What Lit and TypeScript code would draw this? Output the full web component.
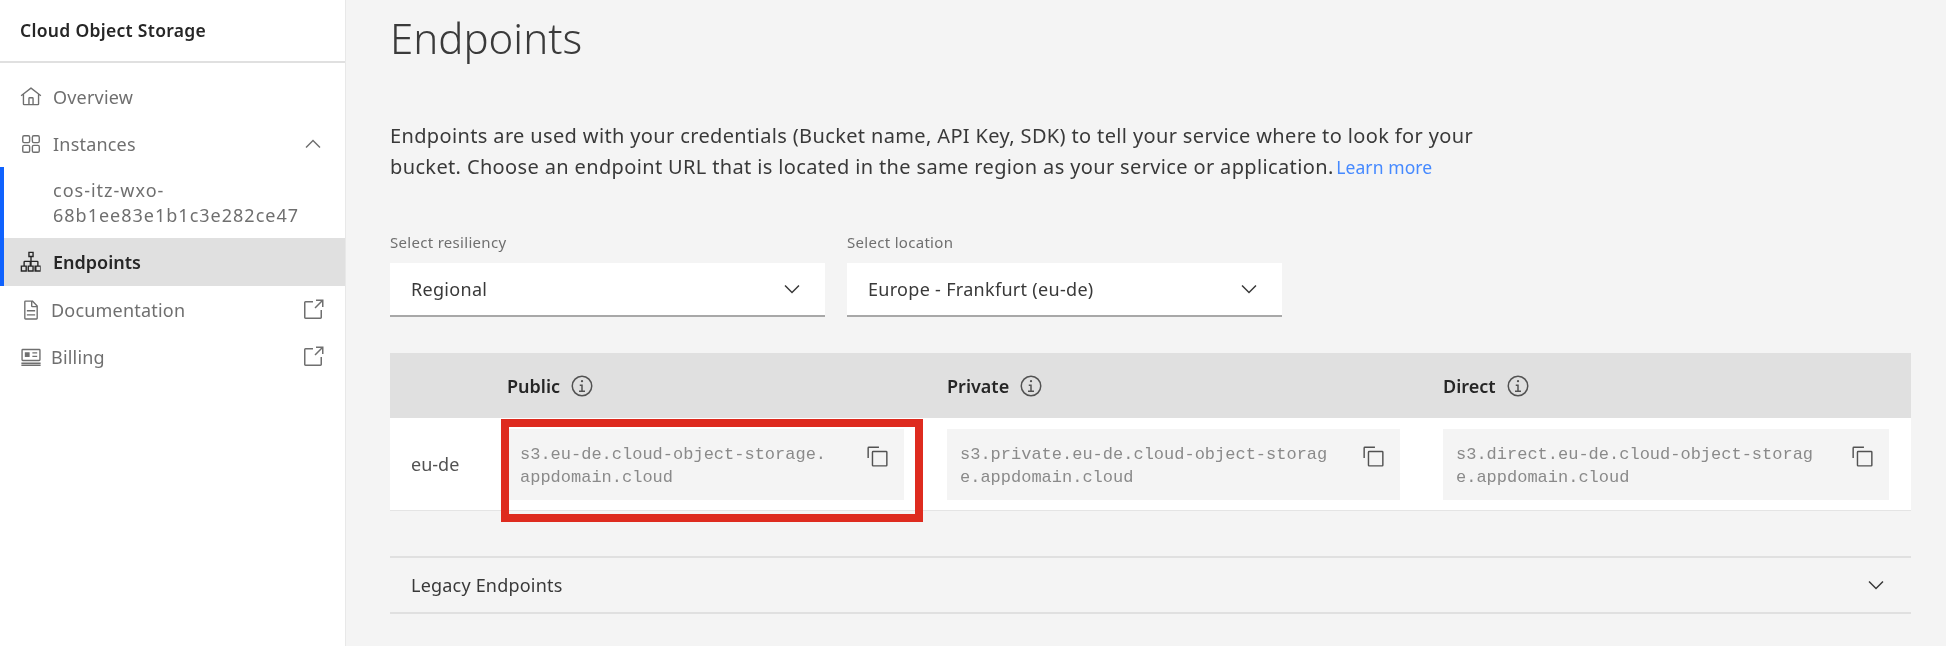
import { LitElement, css, html, svg } from 'lit';
import { customElement } from 'lit/decorators.js';

const icons = {
  home: svg`<path d="M16.6123,2.2138a1.01,1.01,0,0,0-1.2427,0L1,13.4194l1.2427,1.5717L4,13.6209V26a2.0041,2.0041,0,0,0,2,2H26a2.0037,2.0037,0,0,0,2-2V13.63L29.7573,15,31,13.4282ZM18,26H14V18h4Zm2,0V18a2.0023,2.0023,0,0,0-2-2H14a2.0023,2.0023,0,0,0-2,2v8H6V12.0615l10-7.79,10,7.8005V26Z"/>`,
  apps: svg`<path fill-rule="evenodd" d="M6 3h6a3 3 0 0 1 3 3v6a3 3 0 0 1-3 3H6a3 3 0 0 1-3-3V6a3 3 0 0 1 3-3Zm0 2a1 1 0 0 0-1 1v6a1 1 0 0 0 1 1h6a1 1 0 0 0 1-1V6a1 1 0 0 0-1-1ZM20 3h6a3 3 0 0 1 3 3v6a3 3 0 0 1-3 3h-6a3 3 0 0 1-3-3V6a3 3 0 0 1 3-3Zm0 2a1 1 0 0 0-1 1v6a1 1 0 0 0 1 1h6a1 1 0 0 0 1-1V6a1 1 0 0 0-1-1ZM6 17h6a3 3 0 0 1 3 3v6a3 3 0 0 1-3 3H6a3 3 0 0 1-3-3v-6a3 3 0 0 1 3-3Zm0 2a1 1 0 0 0-1 1v6a1 1 0 0 0 1 1h6a1 1 0 0 0 1-1v-6a1 1 0 0 0-1-1ZM20 17h6a3 3 0 0 1 3 3v6a3 3 0 0 1-3 3h-6a3 3 0 0 1-3-3v-6a3 3 0 0 1 3-3Zm0 2a1 1 0 0 0-1 1v6a1 1 0 0 0 1 1h6a1 1 0 0 0 1-1v-6a1 1 0 0 0-1-1Z"/>`,
  network: svg`<path fill-rule="evenodd" d="M12 1h8v8h-3v5h8a2 2 0 0 1 2 2v5h3v9h-9v-9h4v-5h-8v5h3v9h-9v-9h3v-5H7v5h3v9H1v-9h4v-5a2 2 0 0 1 2-2h8V9h-3Zm2 2v4h4V3ZM3 23v5h5v-5Zm10 0v5h5v-5Zm11 0v5h5v-5Z"/>`,
  doc: svg`<path d="M25.7,9.3l-7-7A.9087.9087,0,0,0,18,2H8A2.0058,2.0058,0,0,0,6,4V28a2.0058,2.0058,0,0,0,2,2H24a2.0058,2.0058,0,0,0,2-2V10A.9092.9092,0,0,0,25.7,9.3ZM18,4.4,23.6,10H18ZM24,28H8V4h8v6a2.0058,2.0058,0,0,0,2,2h6Z"/><path d="M10 22h12v2H10zM10 16h12v2H10z"/>`,
  bill: svg`<path fill-rule="evenodd" d="M4 4h24a2 2 0 0 1 2 2v14a2 2 0 0 1-2 2H4a2 2 0 0 1-2-2V6a2 2 0 0 1 2-2Zm0 2v14h24V6Zm3 3h7v7H7Zm11 0h7v2h-7Zm0 5h7v2h-7ZM2 24h28v2H2Zm0 3h28v2H2Z"/>`,
  launch: svg`<path d="M26,28H6a2.0027,2.0027,0,0,1-2-2V6A2.0027,2.0027,0,0,1,6,4H16V6H6V26H26V16h2V26A2.0027,2.0027,0,0,1,26,28Z"/><polygon points="20 2 20 4 26.586 4 18 12.586 19.414 14 28 5.414 28 12 30 12 30 2 20 2"/>`,
  info: svg`<polygon points="17 22 17 14 13 14 13 16 15 16 15 22 12 22 12 24 20 24 20 22 17 22"/><path d="M16,8a1.5,1.5,0,1,0,1.5,1.5A1.5,1.5,0,0,0,16,8Z"/><path d="M16,30A14,14,0,1,1,30,16,14,14,0,0,1,16,30ZM16,4A12,12,0,1,0,28,16,12,12,0,0,0,16,4Z"/>`,
  copy: svg`<path d="M28,10V28H10V10H28m0-2H10a2,2,0,0,0-2,2V28a2,2,0,0,0,2,2H28a2,2,0,0,0,2-2V10a2,2,0,0,0-2-2Z"/><path d="M4,18H2V4A2,2,0,0,1,4,2H18V4H4Z"/>`,
  down: svg`<path d="M16 22L6 12l1.4-1.4 8.6 8.6 8.6-8.6L26 12z"/>`,
  up: svg`<path d="M16 10l10 10-1.4 1.4-8.6-8.6-8.6 8.6L6 20z"/>`,
};

type IconName = keyof typeof icons;

const icon = (name: IconName, cls = '') =>
  html`<svg class="icon ${cls}" viewBox="0 0 32 32" fill="currentColor">${icons[name]}</svg>`;

const endpoints = [
  { name: 'Public', lines: ['s3.eu-de.cloud-object-storage.', 'appdomain.cloud'], marked: true },
  { name: 'Private', lines: ['s3.private.eu-de.cloud-object-storag', 'e.appdomain.cloud'], marked: false },
  { name: 'Direct', lines: ['s3.direct.eu-de.cloud-object-storag', 'e.appdomain.cloud'], marked: false },
];

@customElement('app-root')
export class AppRoot extends LitElement {
  static styles = css`
    :host {
      display: flex;
      min-height: 646px;
      background: #f4f4f4;
      font-family: 'Noto Sans', sans-serif;
      color: #393939;
      /* the reference is an upscaled capture, so everything is a little soft */
      filter: blur(0.4px);
    }
    .icon {
      display: block;
      flex: none;
      width: 24px;
      height: 24px;
    }
    .side {
      flex: none;
      width: 345px;
      background: #fff;
      border-right: 1px solid #e8e8e8;
    }
    .side-head {
      height: 59px;
      padding: 0 0 2px 20px;
      display: flex;
      align-items: center;
      font-size: 17.5px;
      font-weight: 600;
      letter-spacing: 0.3px;
      color: #262626;
      border-bottom: 2px solid #e0e0e0;
    }
    .nav {
      padding-top: 10px;
      color: #6f6f6f;
      font-size: 18px;
      letter-spacing: 0.2px;
    }
    .row {
      height: 47px;
      display: flex;
      align-items: center;
      gap: 11px;
      padding: 0 20px;
    }
    .row > .icon:first-child {
      width: 22px;
      height: 22px;
    }
    .row .grow {
      flex: 1;
    }
    .row.ext {
      gap: 9px;
    }
    .group {
      border-left: 4px solid #0f62fe;
    }
    .sub {
      height: 71px;
      padding-left: 49px;
      display: flex;
      flex-direction: column;
      justify-content: center;
      line-height: 25px;
      letter-spacing: 1px;
    }
    .row.active {
      height: 48px;
      padding-left: 16px;
      background: #e0e0e0;
      color: #262626;
      font-weight: 600;
      letter-spacing: 0;
    }
    .main {
      flex: 1;
      min-width: 0;
      padding: 12px 35px 0 44px;
    }
    h1 {
      margin: 0;
      font-size: 42px;
      font-weight: 300;
      line-height: 52px;
      color: #3a3a3a;
    }
    .intro {
      margin: 56px 0 0;
      font-size: 20px;
      letter-spacing: 0.36px;
      line-height: 31px;
      color: #393939;
    }
    .intro a {
      margin-left: -3px;
      color: #4589ff;
      font-size: 17.5px;
      letter-spacing: 0.1px;
      text-decoration: none;
    }
    .filters {
      margin-top: 48px;
      display: flex;
      gap: 22px;
    }
    .field {
      width: 435px;
    }
    .field label {
      display: block;
      height: 32px;
      font-size: 15px;
      letter-spacing: 0.3px;
      line-height: 22px;
      color: #6f6f6f;
    }
    .select {
      height: 52px;
      display: flex;
      align-items: center;
      justify-content: space-between;
      padding: 0 21px 0 21px;
      background: #fff;
      border-bottom: 2px solid #a8a8a8;
      font-size: 18px;
      letter-spacing: 0.3px;
      color: #393939;
    }
    .table {
      margin-top: 36px;
    }
    .thead,
    .tbody {
      display: grid;
      grid-template-columns: 74px 397px 453px 446px;
      column-gap: 43px;
      padding-right: 22px;
    }
    .thead {
      height: 65px;
      align-items: center;
      background: #e0e0e0;
    }
    .th {
      display: flex;
      align-items: center;
      gap: 10px;
      font-size: 18px;
      font-weight: 600;
      color: #262626;
    }
    .th .icon {
      color: #525252;
    }
    .tbody {
      height: 92px;
      align-items: center;
      background: #fff;
      border-bottom: 1px solid #e4e4e4;
    }
    .region {
      padding-left: 21px;
      font-size: 18px;
      color: #525252;
    }
    .snippet {
      position: relative;
      height: 71px;
      display: flex;
      justify-content: space-between;
      padding: 14px 16px 0 13px;
      box-sizing: border-box;
      background: #f4f4f4;
      font-family: 'Liberation Mono', monospace;
      font-size: 17px;
      line-height: 23px;
      color: #8a8a8a;
    }
    .snippet .icon {
      margin: 2px -1px 0 0;
      width: 23px;
      height: 23px;
      color: #525252;
    }
    /* annotation drawn over the first endpoint */
    .mark {
      position: absolute;
      left: -6px;
      right: -19px;
      top: -10px;
      bottom: -22px;
      border: 8px solid #de2b1f;
      pointer-events: none;
    }
    .legacy {
      margin-top: 45px;
      height: 54px;
      display: flex;
      align-items: center;
      justify-content: space-between;
      padding: 0 23px 0 21px;
      border-top: 2px solid #e0e0e0;
      border-bottom: 2px solid #e0e0e0;
      font-size: 18px;
      letter-spacing: 0.2px;
      color: #393939;
    }
  `;

  render() {
    return html`
      <aside class="side">
        <div class="side-head">Cloud Object Storage</div>
        <nav class="nav">
          <div class="row">${icon('home')}<span>Overview</span></div>
          <div class="row">
            ${icon('apps')}<span class="grow">Instances</span>${icon('up')}
          </div>
          <div class="group">
            <div class="sub"><span>cos-itz-wxo-</span><span>68b1ee83e1b1c3e282ce47</span></div>
            <div class="row active">${icon('network')}<span>Endpoints</span></div>
          </div>
          <div class="row ext">${icon('doc')}<span class="grow">Documentation</span>${icon('launch')}</div>
          <div class="row ext">${icon('bill')}<span class="grow">Billing</span>${icon('launch')}</div>
        </nav>
      </aside>
      <main class="main">
        <h1>Endpoints</h1>
        <p class="intro">
          Endpoints are used with your credentials (Bucket name, API Key, SDK) to tell your service where to look for your<br />
          bucket. Choose an endpoint URL that is located in the same region as your service or application.
          <a href="#">Learn more</a>
        </p>
        <div class="filters">
          <div class="field">
            <label>Select resiliency</label>
            <div class="select"><span>Regional</span>${icon('down')}</div>
          </div>
          <div class="field">
            <label>Select location</label>
            <div class="select"><span>Europe - Frankfurt (eu-de)</span>${icon('down')}</div>
          </div>
        </div>
        <div class="table">
          <div class="thead">
            <div></div>
            ${endpoints.map((e) => html`<div class="th"><span>${e.name}</span>${icon('info')}</div>`)}
          </div>
          <div class="tbody">
            <div class="region">eu-de</div>
            ${endpoints.map(
              (e) => html`
                <div class="snippet">
                  <span>${e.lines[0]}<br />${e.lines[1]}</span>
                  ${icon('copy')}
                  ${e.marked ? html`<div class="mark"></div>` : ''}
                </div>
              `
            )}
          </div>
        </div>
        <div class="legacy"><span>Legacy Endpoints</span>${icon('down')}</div>
      </main>
    `;
  }
}
